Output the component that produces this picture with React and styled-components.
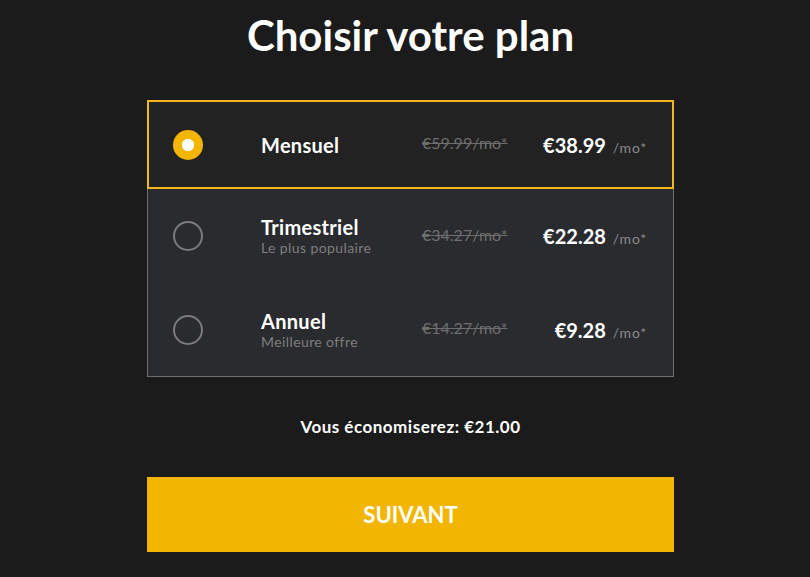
import React, { useState } from "react"
import styled, { createGlobalStyle } from "styled-components"

const GlobalStyle = createGlobalStyle`
  html, body {
    margin: 0;
    padding: 0;
    background: #1b1b1b;
    font-family: Lato, "Noto Sans", sans-serif;
    color: #fff;
  }
`

const plans = [
  { id: "mensuel", name: "Mensuel", old: "€59.99/mo*", price: "€38.99" },
  { id: "trimestriel", name: "Trimestriel", sub: "Le plus populaire", old: "€34.27/mo*", price: "€22.28" },
  { id: "annuel", name: "Annuel", sub: "Meilleure offre", old: "€14.27/mo*", price: "€9.28" },
]

const App = () => {
  const [selected, setSelected] = useState("mensuel")

  return (
    <>
      <GlobalStyle />
      <Page>
        <Title>Choisir votre plan</Title>
        <List>
          {plans.map((p, i) => (
            <Row
              key={p.id}
              $active={selected === p.id}
              $last={i === plans.length - 1}
              onClick={() => setSelected(p.id)}
            >
              <Radio $active={selected === p.id} />
              <Info>
                <Name>{p.name}</Name>
                {p.sub && <Sub>{p.sub}</Sub>}
              </Info>
              <OldPrice>{p.old}</OldPrice>
              <Price>
                {p.price}
                <Per>/mo*</Per>
              </Price>
            </Row>
          ))}
        </List>
        <Savings>Vous économiserez: €21.00</Savings>
        <NextButton>SUIVANT</NextButton>
      </Page>
    </>
  )
}

const Page = styled.div`
  width: 527px;
  margin: 0 0 0 147px;
  display: flex;
  flex-direction: column;
`

const Title = styled.h1`
  margin: 11px 0 0;
  height: 89px;
  text-align: center;
  font-size: 42px;
  font-weight: 700;
  line-height: 48px;
`

const List = styled.div`
  display: flex;
  flex-direction: column;
`

const Row = styled.div`
  box-sizing: border-box;
  display: grid;
  grid-template-columns: 30px 219px 1fr auto;
  align-items: center;
  cursor: pointer;
  height: ${(p) => (p.$active ? "89px" : "94px")};
  padding: ${(p) => (p.$active ? "0 25px 0 24px" : "0 26px 0 25px")};
  background: ${(p) => (p.$active ? "#222222" : "#2a2b2f")};
  border: ${(p) => (p.$active ? "2px solid #f2b51c" : "1px solid #6f6f6f")};
  border-top: ${(p) => (p.$active ? "2px solid #f2b51c" : "none")};
  border-bottom: ${(p) =>
    p.$active ? "2px solid #f2b51c" : p.$last ? "1px solid #6f6f6f" : "none"};
`

const Radio = styled.span`
  box-sizing: border-box;
  width: 30px;
  height: 30px;
  border-radius: 50%;
  border: ${(p) => (p.$active ? "none" : "2px solid #7c7c7c")};
  background: ${(p) =>
    p.$active ? "radial-gradient(circle, #fff 0 6px, #f2b600 6.5px)" : "transparent"};
`

const Info = styled.div`
  display: flex;
  flex-direction: column;
  padding-left: 58px;
`

const Name = styled.div`
  font-size: 20px;
  font-weight: 700;
  line-height: 22px;
  letter-spacing: 0.3px;
`

const Sub = styled.div`
  font-size: 14px;
  color: #7e7e7e;
  line-height: 17px;
  margin-top: 1px;
  letter-spacing: 0.4px;
`

const OldPrice = styled.div`
  font-size: 16px;
  color: #6e6e6e;
  text-decoration: line-through;
  margin-top: -4px;
`

const Price = styled.div`
  text-align: right;
  font-size: 20px;
  font-weight: 700;
`

const Per = styled.span`
  font-size: 14px;
  font-weight: 400;
  color: #8a8a8a;
  margin-left: 7px;
  letter-spacing: 0.8px;
`

const Savings = styled.div`
  margin-top: 40px;
  text-align: center;
  font-size: 17px;
  font-weight: 700;
  line-height: 20px;
  letter-spacing: 0.5px;
`

const NextButton = styled.button`
  margin-top: 40px;
  height: 75px;
  border: none;
  background: #f2b600;
  color: #fff;
  font-family: Lato, "Noto Sans", sans-serif;
  font-size: 22px;
  font-weight: 700;
  cursor: pointer;
`

export default App
